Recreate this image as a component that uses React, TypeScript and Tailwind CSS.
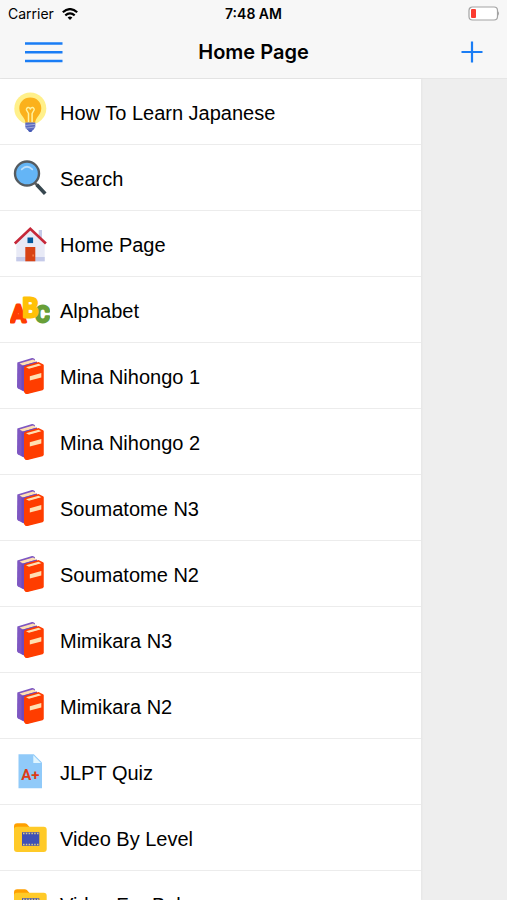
import { useState } from 'react'
import type { ReactNode } from 'react'

type IconName = 'bulb' | 'search' | 'home' | 'alphabet' | 'books' | 'quiz' | 'video'

const MENU_ITEMS: { title: string; icon: IconName }[] = [
  { title: 'How To Learn Japanese', icon: 'bulb' },
  { title: 'Search', icon: 'search' },
  { title: 'Home Page', icon: 'home' },
  { title: 'Alphabet', icon: 'alphabet' },
  { title: 'Mina Nihongo 1', icon: 'books' },
  { title: 'Mina Nihongo 2', icon: 'books' },
  { title: 'Soumatome N3', icon: 'books' },
  { title: 'Soumatome N2', icon: 'books' },
  { title: 'Mimikara N3', icon: 'books' },
  { title: 'Mimikara N2', icon: 'books' },
  { title: 'JLPT Quiz', icon: 'quiz' },
  { title: 'Video By Level', icon: 'video' },
  { title: 'Video For Baby', icon: 'video' },
]

const ICONS: Record<IconName, ReactNode> = {
  bulb: (
    <>
      <circle cx="20.3" cy="16.5" r="16" fill="#fff08a" />
      <path
        d="M20.3 5.5C13.8 5.5 9.3 10.3 9.3 16.3c0 4.3 2.2 6.7 4.1 9.2 1.1 1.5 1.7 3 2 5h9.8c.3-2 .9-3.5 2-5 1.9-2.5 4.1-4.9 4.1-9.2 0-6-4.5-10.8-11-10.8z"
        fill="#fbb11c"
      />
      <path
        d="M18.5 30v-8.5l-2-3.5a1.7 1.7 0 1 1 3.8-1a1.7 1.7 0 1 1 3.8 1l-2 3.5V30"
        fill="none"
        stroke="#fff3a0"
        strokeWidth="1.5"
        strokeLinejoin="round"
      />
      <path d="M15.3 30.5h10V35l-2 3h-6l-2-3z" fill="#5c6bc0" />
      <path d="M15 33.5l10.3-1.2M15.5 36.2L25 35" stroke="#9fa8da" strokeWidth="1" />
      <path d="M17.8 38h5l-1 1.5q-1.5 1-3 0z" fill="#455ab5" />
    </>
  ),
  search: (
    <>
      <path d="M24.5 24.5L28 28" stroke="#616161" strokeWidth="2.6" />
      <path d="M28 28l6 6.5" stroke="#37474f" strokeWidth="3.6" strokeLinecap="square" />
      <circle cx="17" cy="15.5" r="12" fill="#64b5f6" stroke="#555b60" strokeWidth="2.4" />
      <path d="M11.7 11.3q5.3-5 10.6 0" fill="none" stroke="#bbdefb" strokeWidth="1.8" strokeLinecap="round" />
    </>
  ),
  home: (
    <>
      <path d="M28.7 6H32v10h-3.3z" fill="#c5cae9" />
      <path d="M6.3 18.5L20.3 5l14.4 13.5v18.8H6.3z" fill="#e8eaf6" />
      <path d="M6.3 33h28.4v4.3H6.3z" fill="#c5cae9" />
      <path d="M15.3 23h10v14.3h-10z" fill="#d84315" />
      <path d="M22.5 30.5h1.3v2h-1.3z" fill="#ff8a50" />
      <path d="M17.5 13.5h5.6v5.6h-5.6z" fill="#01579b" />
      <path d="M4.8 19.5L20.3 4.7l15.6 14.8" fill="none" stroke="#c62839" strokeWidth="2.6" />
    </>
  ),
  alphabet: (
    <g fontFamily="Roboto, sans-serif" fontWeight="500" strokeWidth="2.8" strokeLinejoin="round" textAnchor="middle">
      <text x="8.5" y="32" fontSize="23" fill="#ff3d00" stroke="#ff3d00">A</text>
      <text x="32.5" y="32" fontSize="22" fill="#689f38" stroke="#689f38">C</text>
      <text x="20.5" y="27" fontSize="25" fill="#ffc107" stroke="#ffc107">B</text>
    </g>
  ),
  books: (
    <>
      <path d="M7.3 6.5L22 2q2-.3 3 1.5V31l-11 4.5-6-3q-1-.5-1-1.7z" fill="#7e57c2" />
      <path d="M9.5 7.5l13.5-4 4 2-14 4z" fill="#ffe0b2" />
      <path d="M11.5 10L27 5.5V26l-13 9-2.5-1z" fill="#7049bd" />
      <path d="M14 11.5q0-1.2 1.500-1.700L28.500 6l5 2.500V33L16 38l-2-2.500z" fill="#ff3d00" />
      <path d="M16 11.300l12.500-3.600 3 1.500-12.500 3.500z" fill="#ffe0b2" />
      <path d="M14 12l4.500 1.500L33.500 9v24q0 1-1 1.300L17.500 38q-1.800.3-2.700-1-.8-1-.8-2.500z" fill="#ff3d00" />
      <path d="M19.8 20.300l11.500-3.200v4.300l-11.500 3.200z" fill="#ffe0b2" />
    </>
  ),
  quiz: (
    <>
      <path d="M8.5 2.2h15.3l8.2 8.3v25.7H8.500z" fill="#90caf9" />
      <path d="M23.3 3.2V11H31z" fill="#e1f5fe" />
      <text x="20.3" y="28" fontFamily="Roboto, sans-serif" fontWeight="700" fontSize="15" fill="#dd3b17" textAnchor="middle">
        A+
      </text>
    </>
  ),
  video: (
    <>
      <path d="M4 8.500Q4 5.200 7.200 5.200h7.500q1.300 0 2.200.9L19.500 9H30v10H4z" fill="#ffa000" />
      <rect x="4" y="8.7" width="32.7" height="25.3" rx="3" fill="#ffca28" />
      <path d="M12 14.200h17.300v13.600H12z" fill="#3f51b5" />
      <path d="M13 15.500h15.700M13 26.500h15.700" stroke="#e0ca80" strokeWidth="1.7" strokeDasharray="1.5 1.3" />
    </>
  ),
}

function StatusBar() {
  return (
    <div className="grid h-7 grid-cols-3 items-center px-2 text-sm">
      <div className="flex items-center gap-2">
        <span>Carrier</span>
        <svg className="h-3 w-4" viewBox="0 0 16 12" fill="none" stroke="#000" strokeWidth="2.2" aria-hidden="true">
          <path d="M.8 4.300q7.200-6.400 14.400 0M3.300 7.300q4.700-4 9.400 0" />
          <path d="M5.600 9.500q2.400-2 4.800 0L8 11.900z" fill="#000" stroke="none" />
        </svg>
      </div>
      <span className="text-center font-semibold">7:48 AM</span>
      <svg className="h-4 w-8 justify-self-end" viewBox="0 0 32 16" aria-hidden="true">
        <rect x="2" y="1" width="28.5" height="13" rx="3.5" fill="#fff" stroke="#a3a3a3" strokeWidth="1.2" />
        <rect x="4" y="3" width="5" height="9" rx="1" fill="#fb3b30" />
        <path d="M31 5.300q2 2.200 0 4.400z" fill="#a3a3a3" />
      </svg>
    </div>
  )
}

export default function App() {
  const [menuOpen, setMenuOpen] = useState(true)

  return (
    <div className="flex h-screen flex-col overflow-hidden bg-[#eeeeee] text-black">
      <header className="shrink-0 border-b border-[#e6e6e6] bg-[#f7f7f7] font-['Inter',sans-serif]">
        <StatusBar />
        <div className="grid h-[50px] grid-cols-3 items-center px-6 pb-0.5">
          <button
            type="button"
            aria-label="Menu"
            aria-expanded={menuOpen}
            className="justify-self-start"
            onClick={() => setMenuOpen(!menuOpen)}
          >
            <svg className="h-6 w-10" viewBox="0 0 40 24" stroke="#1a7df5" strokeWidth="2.4" aria-hidden="true">
              <path d="M1 3.500h37.500M1 12.200h37.500M1 21h37.500" />
            </svg>
          </button>
          <h1 className="text-center text-xl font-semibold whitespace-nowrap">Home Page</h1>
          <button type="button" aria-label="Add" className="justify-self-end">
            <svg className="h-6 w-6" viewBox="0 0 24 24" stroke="#1a7df5" strokeWidth="2.2" aria-hidden="true">
              <path d="M13 1.500v21M2.500 12h21" />
            </svg>
          </button>
        </div>
      </header>

      {menuOpen && (
        <nav className="min-h-0 w-[83%] flex-1 overflow-hidden bg-white font-['Liberation_Sans',Arial,sans-serif] shadow-[1px_0_2px_rgba(0,0,0,0.04)]">
          <ul>
            {MENU_ITEMS.map((item) => (
              <li key={item.title} className="border-b border-[#ececec]">
                <a href="#" className="flex h-[65px] items-center gap-2.5 pl-2.5 text-xl">
                  <svg className="h-10 w-10 shrink-0" viewBox="0 0 40 40" aria-hidden="true">
                    {ICONS[item.icon]}
                  </svg>
                  <span className="pt-0.5">{item.title}</span>
                </a>
              </li>
            ))}
          </ul>
        </nav>
      )}
    </div>
  )
}
